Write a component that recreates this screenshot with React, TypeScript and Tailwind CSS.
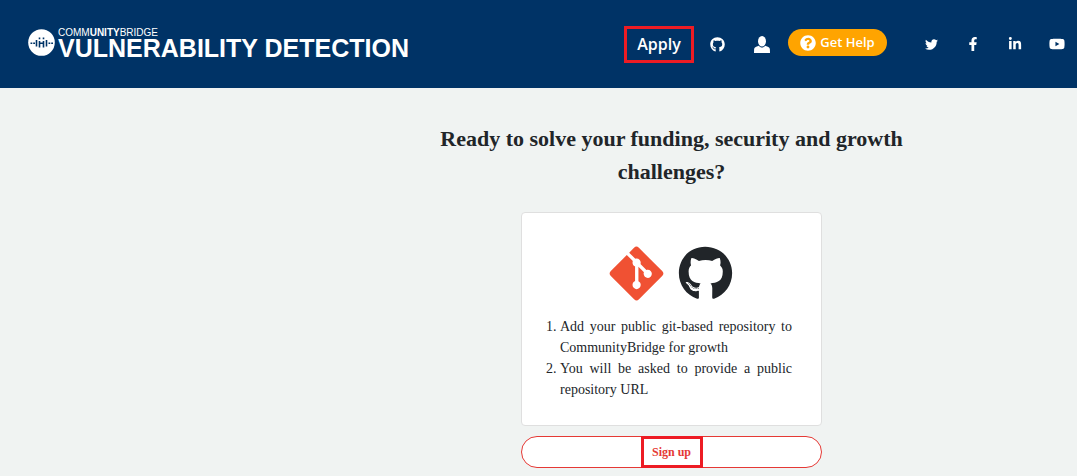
import type { ReactNode } from "react";
import {
  FaFacebookF,
  FaGitAlt,
  FaGithub,
  FaLinkedinIn,
  FaQuestionCircle,
  FaTwitter,
  FaYoutube,
} from "react-icons/fa";

function Logo() {
  return (
    <a href="#" className="mb-[3px] flex items-center gap-[3px] whitespace-nowrap text-white">
      <svg viewBox="0 0 27 27" className="size-[27px]" aria-hidden="true">
        <circle cx="13.5" cy="13.5" r="13.3" fill="#fff" />
        <g stroke="#003366" strokeWidth="1.6" fill="none">
          <path d="M8.500 11v6.500M11.500 8.500v1.800M11.500 12v6.500M15.500 8.500v1.800M15.500 12v6.500M18.500 11v6.500" />
          <path d="M2.500 14.200h1.800M5.200 14.200h1.800M11.500 14.200h4M20.500 14.200h1.800M23.200 14.200h1.800" strokeWidth="1.4" />
        </g>
      </svg>
      <span className="flex flex-col font-['Liberation_Sans',sans-serif]">
        <span className="text-[10px] leading-[11px]">
          COMM<b>UNITY</b>BRIDGE
        </span>
        <span className="text-[25px] leading-5 font-bold">VULNERABILITY DETECTION</span>
      </span>
    </a>
  );
}

function PersonIcon() {
  return (
    <svg viewBox="0 0 16 17" className="h-[17px] w-4" fill="currentColor" aria-hidden="true">
      <ellipse cx="8" cy="5.200" rx="4" ry="5.200" />
      <path d="M4.800 9.800C5.700 11 6.800 11.600 8 11.600s2.300-.6 3.200-1.800l2.600 1c1.300.5 2 1.400 2.100 2.700L16 17H0l.1-3.500c.1-1.300.8-2.200 2.100-2.700z" />
    </svg>
  );
}

function IconLink({ label, children }: { label: string; children: ReactNode }) {
  return (
    <a href="#" aria-label={label} className="flex w-4 justify-center">
      {children}
    </a>
  );
}

function Header() {
  return (
    <header className="flex h-[88px] items-center justify-between bg-[#003366] pr-3 pl-7 font-['Open_Sans',sans-serif] text-white">
      <Logo />
      <nav className="flex items-center">
        <a
          href="#"
          className="flex h-[37px] w-[70px] items-center justify-center border-3 border-[#ed1c24] text-base font-semibold"
        >
          Apply
        </a>
        <div className="ml-[15px] flex items-center gap-[29px]">
          <IconLink label="GitHub repository">
            <FaGithub className="size-[15px]" />
          </IconLink>
          <IconLink label="Account">
            <PersonIcon />
          </IconLink>
        </div>
        <button
          type="button"
          className="mr-9 mb-[3px] ml-[18px] flex h-[27px] w-[99px] items-center justify-center gap-1 rounded-full bg-[#ffa400] text-[13px] font-semibold whitespace-nowrap"
        >
          <FaQuestionCircle className="size-4" />
          Get Help
        </button>
        <div className="flex items-center gap-[26px]">
          <IconLink label="Twitter">
            <FaTwitter className="size-[13px]" />
          </IconLink>
          <IconLink label="Facebook">
            <FaFacebookF className="size-[14px]" />
          </IconLink>
          <IconLink label="LinkedIn">
            <FaLinkedinIn className="size-[14px]" />
          </IconLink>
          <IconLink label="YouTube">
            <FaYoutube className="size-4" />
          </IconLink>
        </div>
      </nav>
    </header>
  );
}

export default function App() {
  return (
    <div className="min-h-screen bg-[#f0f3f2] font-['Liberation_Serif',serif] text-[#212529]">
      <Header />
      <main className="flex flex-col items-center pt-[34px] pb-2 pl-[266px]">
        <h1 className="max-w-[480px] text-center text-[22px] leading-[33px] font-bold">
          Ready to solve your funding, security and growth challenges?
        </h1>
        <section className="mt-6 w-[301px] rounded border border-[#dfdfdf] bg-white px-[29px] pt-[30px] pb-[25px]">
          <div className="flex items-center justify-center gap-[11px] pr-1">
            <FaGitAlt className="size-[61px] text-[#f05133]" />
            <FaGithub className="size-[55px]" />
          </div>
          <ol className="mt-3 list-decimal pl-[9px] text-justify text-sm leading-[21px]">
            <li>Add your public git-based repository to CommunityBridge for growth</li>
            <li>You will be asked to provide a public repository URL</li>
          </ol>
        </section>
        <button
          type="button"
          className="mt-[10px] flex h-8 w-[301px] items-center justify-center rounded-full border border-[#e53935] bg-white text-xs font-bold text-[#e53935]"
        >
          <span className="flex h-8 w-[62px] items-center justify-center border-3 border-[#ed1c24]">
            Sign up
          </span>
        </button>
      </main>
    </div>
  );
}
